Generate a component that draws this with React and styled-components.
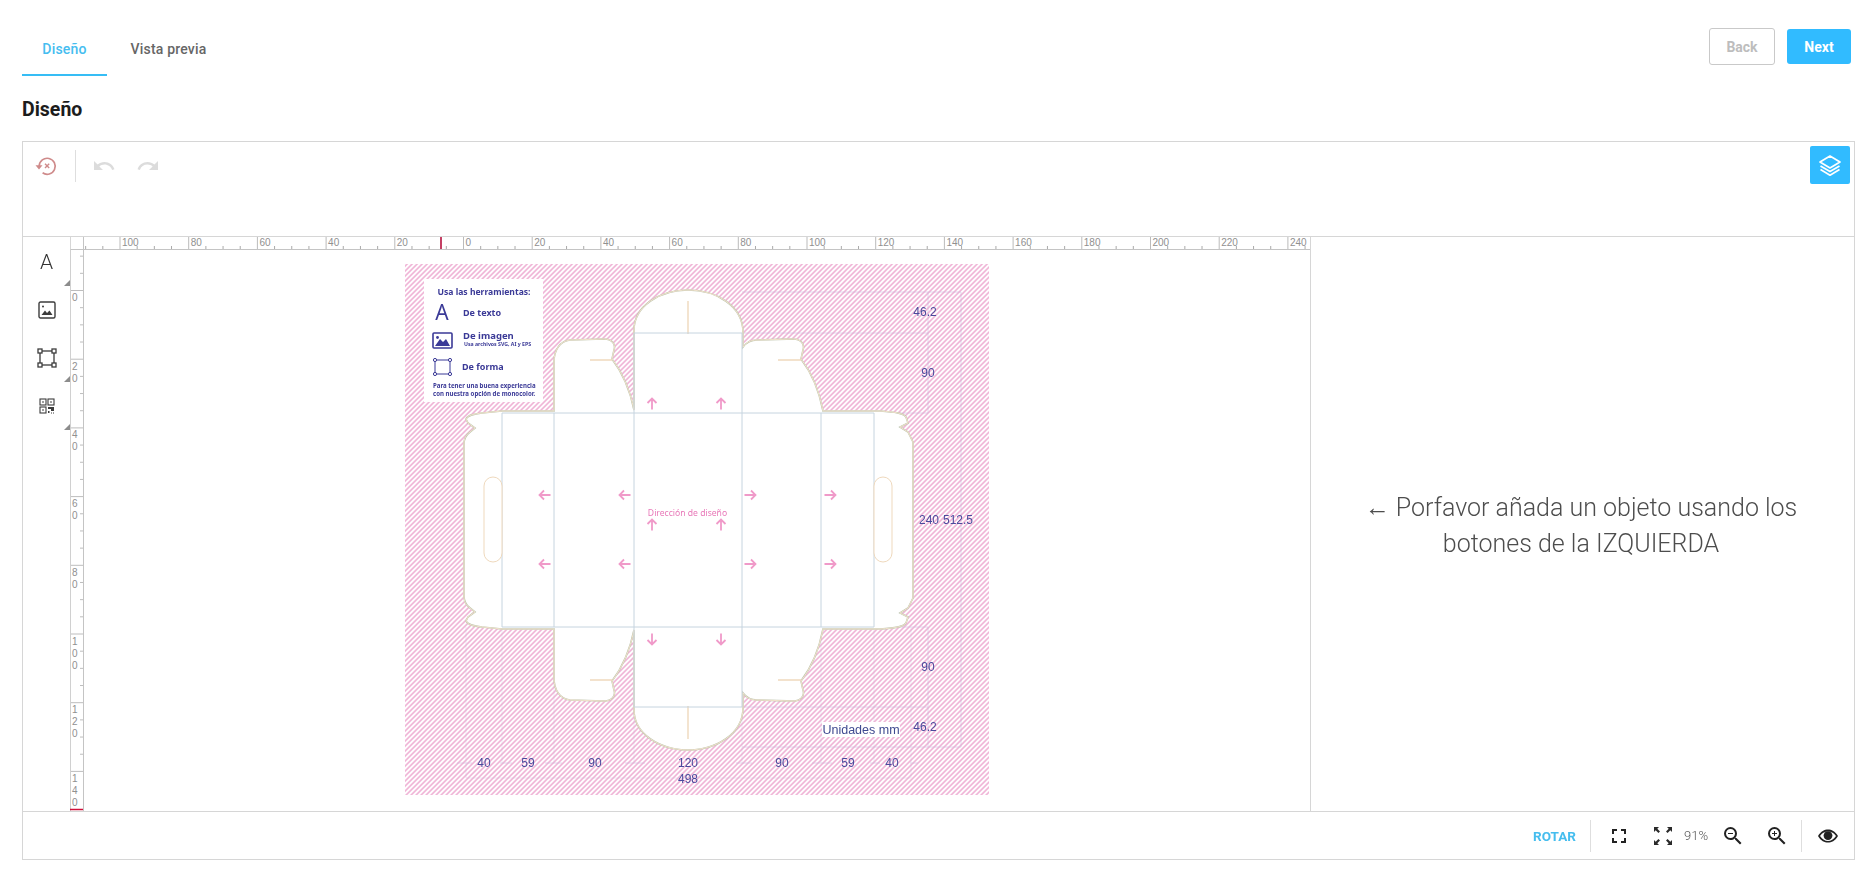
import React from "react";
import styled, { createGlobalStyle } from "styled-components";
import { MdUndo, MdRedo, MdFullscreen, MdOutlineZoomIn, MdOutlineZoomOut } from "react-icons/md";

const Global = createGlobalStyle`
  html, body { margin: 0; padding: 0; background: #fff; }
  body { font-family: Roboto, "Liberation Sans", sans-serif; color: #222; }
  *, *::before, *::after { box-sizing: border-box; }
`;

const Page = styled.div`
  width: 1874px;
  height: 873px;
  padding: 0 19px 0 22px;
  display: flex;
  flex-direction: column;
`;
const TopBar = styled.div`
  height: 76px;
  display: flex;
  justify-content: space-between;
  align-items: flex-start;
`;
const Tabs = styled.div`
  display: flex;
  height: 76px;
`;
const Tab = styled.div`
  width: ${(p) => p.$w}px;
  height: 76px;
  padding-top: 40px;
  text-align: center;
  font-size: 14px;
  line-height: 18px;
  font-weight: 500;
  letter-spacing: 0.2px;
  color: ${(p) => (p.$active ? "#45bdf0" : "#666")};
  border-bottom: 2px solid ${(p) => (p.$active ? "#36bdf5" : "transparent")};
`;
const Actions = styled.div`
  display: flex;
  gap: 12px;
  margin: 28px 4px 0 0;
  align-items: center;
`;
const ActionButton = styled.button`
  height: ${(p) => (p.$primary ? 35 : 37)}px;
  width: ${(p) => (p.$primary ? 64 : 66)}px;
  border-radius: 3px;
  font: 700 14px Roboto, sans-serif;
  padding: 0;
  border: ${(p) => (p.$primary ? "none" : "1px solid #c9c9c9")};
  background: ${(p) => (p.$primary ? "#31bbff" : "#fff")};
  color: ${(p) => (p.$primary ? "#fff" : "#bdbdbd")};
`;
const Title = styled.h2`
  margin: 0;
  height: 65px;
  padding-top: 22px;
  font-size: 19.5px;
  line-height: 23px;
  font-weight: 700;
  color: #1c1c1c;
`;
const Frame = styled.div`
  width: 1833px;
  height: 719px;
  border: 1px solid #d6d6d6;
  display: flex;
  flex-direction: column;
`;
const Toolbar = styled.div`
  height: 95px;
  flex: none;
  border-bottom: 1px solid #d6d6d6;
  display: flex;
  align-items: flex-start;
  padding: 8px 4px 0 0;
`;
const ToolIcon = styled.div`
  width: ${(p) => p.$w}px;
  height: 32px;
  margin-left: ${(p) => p.$ml || 0}px;
  display: flex;
  align-items: center;
  justify-content: center;
  color: ${(p) => p.$color || "#dcdcdc"};
  flex: none;
`;
const VRule = styled.div`
  width: 1px;
  height: ${(p) => p.$h}px;
  background: #dedede;
  flex: none;
  margin: ${(p) => p.$m || 0};
`;
const LayersButton = styled.div`
  width: 40px;
  height: 38px;
  margin: -4px 0 0 auto;
  background: #31bbff;
  border-radius: 2px;
  display: flex;
  align-items: center;
  justify-content: center;
`;
const Workspace = styled.div`
  height: 575px;
  flex: none;
  display: flex;
  border-bottom: 1px solid #d6d6d6;
`;
const ToolColumn = styled.div`
  width: 47px;
  flex: none;
  padding-top: 1px;
`;
const ToolButton = styled.div`
  position: relative;
  height: 48px;
  display: flex;
  align-items: center;
  justify-content: center;
  color: #333;
  font-size: 21px;
  font-weight: 300;
  &::after {
    content: "";
    display: ${(p) => (p.$corner ? "block" : "none")};
    position: absolute;
    right: 0;
    bottom: 0;
    border-style: solid;
    border-width: 0 0 6px 6px;
    border-color: transparent transparent #8c8c8c transparent;
  }
`;
const Stage = styled.div`
  width: 1241px;
  flex: none;
  border-right: 1px solid #d6d6d6;
  display: grid;
  grid-template-columns: 14px 1fr;
  grid-template-rows: 13px 1fr;
  overflow: hidden;
`;
const RulerCorner = styled.div`
  border-right: 1px solid #c4c4c4;
  border-bottom: 1px solid #c4c4c4;
  border-left: 1px solid #d6d6d6;
`;
const RulerSvg = styled.svg`
  display: block;
`;
const Canvas = styled.div`
  padding: 14px 0 0 321px;
`;
const ArtworkSvg = styled.svg`
  display: block;
`;
const Message = styled.div`
  flex: 1;
  display: flex;
  align-items: center;
  justify-content: center;
  text-align: center;
  padding: 2px 3px 0 0;
  font-size: 25px;
  line-height: 36px;
  font-weight: 300;
  color: #4d4d4d;
`;
const MessageArrow = styled.span`
  font-family: "Liberation Sans", sans-serif;
`;
const StatusBar = styled.div`
  flex: 1;
  display: flex;
  align-items: center;
  justify-content: flex-end;
  color: #222;
`;
const Rotate = styled.span`
  font-size: 13.5px;
  font-weight: 700;
  color: #45bdee;
  margin-right: 14px;
`;
const StatusIcon = styled.div`
  width: ${(p) => p.$w}px;
  flex: none;
  display: flex;
  align-items: center;
  justify-content: center;
`;
const Percent = styled.span`
  font-size: 13px;
  font-weight: 300;
  color: #555;
  width: 30px;
  text-align: center;
`;

const Ruler = ({ horizontal }) => {
  const items = [];
  const u = 68.7 / 4;
  if (horizontal) {
    const ox = 463 - 84;
    for (let i = -22; i <= 50; i++) {
      const x = ox + i * u + 0.5;
      if (x < 0) continue;
      const major = i % 4 === 0;
      items.push(<line key={i} x1={x} x2={x} y1={major ? 0 : 9} y2={12} stroke={major ? "#bbb" : "#aaa"} strokeWidth="1" />);
      if (major) items.push(<text key={"t" + i} x={x + 2} y={8.5} fontSize="10" fontFamily="Liberation Sans" fill="#909090">{Math.abs(i * 5)}</text>);
    }
    return (
      <RulerSvg width="1227" height="13">
        {items}
        <line x1="357" x2="357" y1="0" y2="12" stroke="#b00030" strokeWidth="1.5" />
        <line x1="0" x2="1227" y1="12.5" y2="12.5" stroke="#c4c4c4" />
      </RulerSvg>
    );
  }
  const oy = 290 - 250;
  for (let i = -2; i <= 28; i++) {
    const y = oy + i * u + 0.5;
    const major = i % 4 === 0;
    items.push(<line key={i} x1={major ? 0 : 10} x2={13} y1={y} y2={y} stroke="#bdbdbd" />);
    if (major && i >= 0) {
      String(i * 5).split("").forEach((d, k) => {
        items.push(<text key={`t${i}-${k}`} x={2} y={y + 10.5 + k * 12} fontSize="10" fontFamily="Liberation Sans" fill="#909090">{d}</text>);
      });
    }
  }
  return (
    <RulerSvg width="14" height="561">
      {items}
      <line x1="0.5" x2="0.5" y1="0" y2="561" stroke="#d0d0d0" />
      <line x1="13.5" x2="13.5" y1="0" y2="561" stroke="#c4c4c4" />
      <line x1="0" x2="13" y1="559.5" y2="559.5" stroke="#d0103a" strokeWidth="1.5" />
    </RulerSvg>
  );
};

const outline =
  "M464 520 L464 444 C464 438 466 435 470 432 L475 428 L468 423 L466 419 C468 415 474 414 482 413 L502 411 L554 411 L554 362 C554 350 560 341 570 340 L604 339 C612 339 616 344 614 350 L612 359 C622 372 630 390 634 410 L634 330 C634 306 660 290 688 290 C716 290 743 306 743 332 L743 347 C746 343 750 340 757 340 L793 339 C801 339 805 344 803 350 L801 359 C811 372 819 390 823 411 L880 411 C895 412 903 413 906 417 L908 423 L900 427 L908 432 L913 442 L913 520";

const HalfBox = () => (
  <>
    <path d={outline + " Z"} fill="#fff" stroke="none" />
    <path d={outline} fill="none" stroke="#bcc4ae" strokeWidth="1.6" />
    <path d={outline} fill="none" stroke="#f1e2cb" strokeWidth="1" />
    <path d="M688 301 V334 M590 360 H612 M778 360 H801" stroke="#efd9bd" strokeWidth="1.4" fill="none" />
  </>
);

const Arrow = ({ x, y, r }) => (
  <path
    transform={`translate(${x} ${y}) rotate(${r})`}
    d="M0 5.5 V-5.5 M-4.5 -1 L0 -5.5 L4.5 -1"
    stroke="#f09ac9"
    strokeWidth="1.8"
    fill="none"
  />
);

const DimText = ({ x, y, children }) => (
  <text x={x} y={y} textAnchor="middle" fontSize="12" fontFamily="Liberation Sans" fill="#4a4a9c">{children}</text>
);

const LegendText = ({ x, y, s, anchor, children }) => (
  <text x={x} y={y} fontSize={s} fontWeight="700" textAnchor={anchor} fontFamily="Noto Sans" fill="#3b3a97">{children}</text>
);

const Artwork = () => (
  <ArtworkSvg width="584" height="531" viewBox="405 264 584 531">
    <defs>
      <pattern id="hatch" width="3.5355" height="3.5355" patternUnits="userSpaceOnUse" patternTransform="rotate(45)">
        <rect width="3.5355" height="3.5355" fill="#fff" />
        <rect width="1.6" height="3.5355" fill="#efb2d5" />
      </pattern>
    </defs>
    <rect x="405" y="264" width="584" height="531" fill="url(#hatch)" />

    <g stroke="#cdb7dc" strokeWidth="1" fill="none" opacity="0.55">
      <path d="M742 292 H961 V747 H742 M742 333 H928 V413 M823 413 H928 M928 292 V333 M928 627 V747 M823 627 H928 M742 707 H928" />
      <path d="M466 627 V778 H911 V627 M502 627 V763 M554 627 V763 M634 707 V763 M742 707 V763 M821 627 V763 M874 627 V763" opacity="0.5" />
      <path d="M457 763 H472 M500 763 H512 M545 763 H562 M625 763 H645 M736 763 H752 M812 763 H832 M870 763 H880 M910 763 H918" />
    </g>

    <HalfBox />
    <g transform="translate(0 1040) scale(1 -1)"><HalfBox /></g>

    <g stroke="#c6d4df" strokeWidth="1" fill="none">
      <path d="M502 413 H874 M502 627 H874 M634 333 H742 M634 707 H742 M502 413 V627 M554 413 V627 M634 333 V707 M742 333 V707 M821 413 V627 M874 413 V627" />
    </g>
    <g stroke="#efd9bd" strokeWidth="1" fill="#fff">
      <rect x="484" y="477" width="18" height="85" rx="9" />
      <rect x="874" y="477" width="18" height="85" rx="9" />
    </g>

    {[[545, 495], [625, 495], [545, 564], [625, 564]].map(([x, y]) => <Arrow key={`l${x}${y}`} x={x} y={y} r={-90} />)}
    {[[750, 495], [830, 495], [750, 564], [830, 564]].map(([x, y]) => <Arrow key={`r${x}${y}`} x={x} y={y} r={90} />)}
    {[[652, 404], [721, 404], [652, 525], [721, 525]].map(([x, y]) => <Arrow key={`u${x}${y}`} x={x} y={y} r={0} />)}
    {[[652, 639], [721, 639]].map(([x, y]) => <Arrow key={`d${x}${y}`} x={x} y={y} r={180} />)}
    <text x="687.5" y="516" textAnchor="middle" fontSize="8.6" fontFamily="Noto Sans" fill="#e878b8">Dirección de diseño</text>

    <rect x="424" y="279" width="119" height="123" fill="#fff" />
    <LegendText x={484} y={295} s={8.6} anchor="middle">Usa las herramientas:</LegendText>
    <text x="442" y="320" textAnchor="middle" fontSize="21" fontFamily="Noto Sans" fill="#3b3a97">A</text>
    <LegendText x={463} y={316} s={9}>De texto</LegendText>
    <g>
      <rect x="433" y="333" width="19" height="15" rx="1" fill="#fff" stroke="#3b3a97" strokeWidth="1.6" />
      <path d="M435 346 L440 339 L443 342 L446 339 L450 346 Z" fill="#3b3a97" />
      <circle cx="437.5" cy="337.5" r="1.4" fill="#3b3a97" />
    </g>
    <LegendText x={463} y={339} s={9.5}>De imagen</LegendText>
    <LegendText x={464} y={346} s={5.2}>Usa archivos SVG, AI y EPS</LegendText>
    <g fill="#fff" stroke="#3b3a97" strokeWidth="1">
      <rect x="435" y="360" width="15" height="14" fill="none" />
      <circle cx="435" cy="360" r="1.6" />
      <circle cx="450" cy="360" r="1.6" />
      <circle cx="435" cy="374" r="1.6" />
      <circle cx="450" cy="374" r="1.6" />
    </g>
    <LegendText x={462} y={370} s={9}>De forma</LegendText>
    <LegendText x={433} y={388} s={6.1}>Para tener una buena experiencia</LegendText>
    <LegendText x={433} y={396} s={6.1}>con nuestra opción de monocolor.</LegendText>

    <DimText x={925} y={316}>46.2</DimText>
    <DimText x={928} y={377}>90</DimText>
    <DimText x={928} y={671}>90</DimText>
    <DimText x={925} y={731}>46.2</DimText>
    <DimText x={929} y={524}>240</DimText>
    <DimText x={958} y={524}>512.5</DimText>
    {[[484, "40"], [528, "59"], [595, "90"], [688, "120"], [782, "90"], [848, "59"], [892, "40"]].map(([x, t], i) => (
      <DimText key={i} x={x} y={767}>{t}</DimText>
    ))}
    <DimText x={688} y={783}>498</DimText>
    <rect x="822" y="722" width="78" height="15" fill="#fff" />
    <text x="861" y="733.5" textAnchor="middle" fontSize="12.5" fontFamily="Liberation Sans" fill="#3e4a90">Unidades mm</text>
  </ArtworkSvg>
);

const RevertIcon = () => (
  <svg width="24" height="24" viewBox="0 0 24 24" fill="none" stroke="#cf8b8b" strokeWidth="1.7">
    <path d="M5.2 12 A 8 8 0 1 1 8.6 18.8" />
    <path d="M1.5 11.2 H8.5 L5 15.5 Z" fill="#cf8b8b" stroke="none" />
    <path d="M11 9.8 L15.2 14 M15.2 9.8 L11 14" strokeWidth="1.4" />
  </svg>
);

const LayersIcon = () => (
  <svg width="24" height="24" viewBox="0 0 24 24" fill="none" stroke="#fff" strokeWidth="1.7" strokeLinejoin="round">
    <path d="M12 3 L22 9 L12 15 L2 9 Z" />
    <path d="M2.5 13 L12 18.6 L21.5 13" />
    <path d="M2.5 16.6 L12 22.2 L21.5 16.6" />
  </svg>
);

const ImageIcon = () => (
  <svg width="18" height="18" viewBox="0 0 18 18" fill="none">
    <rect x="1" y="1" width="16" height="16" rx="1.5" stroke="#3c3c3c" strokeWidth="1.4" />
    <circle cx="5" cy="5.5" r="1" fill="#3c3c3c" />
    <path d="M3.5 14 L7 9.5 L9 12 L11.5 9.5 L14.5 14 Z" fill="#3c3c3c" />
  </svg>
);

const ShapeIcon = () => (
  <svg width="20" height="20" viewBox="0 0 20 20" fill="none" stroke="#3c3c3c" strokeWidth="1.3">
    <rect x="3" y="3" width="14" height="14" />
    {[[1, 1], [15, 1], [1, 15], [15, 15]].map(([x, y]) => (
      <rect key={`${x}${y}`} x={x} y={y} width="4" height="4" fill="#fff" />
    ))}
  </svg>
);

const QrIcon = () => (
  <svg width="16" height="16" viewBox="0 0 16 16" fill="none" stroke="#3c3c3c" strokeWidth="1.1">
    <rect x="1" y="1" width="6" height="6" />
    <rect x="9" y="1" width="6" height="6" />
    <rect x="1" y="9" width="6" height="6" />
    <rect x="3.3" y="3.3" width="1.4" height="1.4" fill="#3c3c3c" stroke="none" />
    <rect x="11.3" y="3.3" width="1.4" height="1.4" fill="#3c3c3c" stroke="none" />
    <rect x="3.3" y="11.3" width="1.4" height="1.4" fill="#3c3c3c" stroke="none" />
    <path d="M9 9 H15 V13 H12 V11 H9 Z" fill="#3c3c3c" stroke="none" />
    <path d="M9 13 H10.5 V15 H9 Z M12 14.5 H13 V15.5 H12 Z M14 14.5 H15 V15.5 H14 Z" fill="#3c3c3c" stroke="none" />
  </svg>
);

const ExpandIcon = () => (
  <svg width="20" height="20" viewBox="0 0 20 20" fill="#2a2a2a">
    <path d="M1 1 H6 L4.3 2.7 L7 5.4 L5.4 7 L2.7 4.3 L1 6 Z" />
    <path d="M19 1 H14 L15.7 2.7 L13 5.4 L14.6 7 L17.3 4.3 L19 6 Z" />
    <path d="M1 19 H6 L4.3 17.3 L7 14.6 L5.4 13 L2.7 15.7 L1 14 Z" />
    <path d="M19 19 H14 L15.7 17.3 L13 14.6 L14.6 13 L17.3 15.7 L19 14 Z" />
  </svg>
);

const EyeIcon = () => (
  <svg width="22" height="16" viewBox="0 0 22 16" fill="#222">
    <path fillRule="evenodd" d="M1 8 C4 3 7.5 1.5 11 1.5 C14.5 1.5 18 3 21 8 C18 13 14.5 14.5 11 14.5 C7.5 14.5 4 13 1 8 Z M3 8 C5.5 11.6 8 13 11 13 C14 13 16.5 11.6 19 8 C16.5 4.8 14 3.6 11 3.6 C8 3.6 5.5 4.8 3 8 Z" />
    <circle cx="11" cy="7.6" r="4.4" />
  </svg>
);

export default function App() {
  return (
    <Page>
      <Global />
      <TopBar>
        <Tabs>
          <Tab $active $w={85}>Diseño</Tab>
          <Tab $w={123}>Vista previa</Tab>
        </Tabs>
        <Actions>
          <ActionButton>Back</ActionButton>
          <ActionButton $primary>Next</ActionButton>
        </Actions>
      </TopBar>
      <Title>Diseño</Title>
      <Frame>
        <Toolbar>
          <ToolIcon $w={46} $color="#cf8b8b"><RevertIcon /></ToolIcon>
          <VRule $h={32} $m="0 0 0 6px" />
          <ToolIcon $w={44} $ml={6} $color="#dcdcdc"><MdUndo size={24} /></ToolIcon>
          <ToolIcon $w={44} $color="#dcdcdc"><MdRedo size={24} /></ToolIcon>
          <LayersButton><LayersIcon /></LayersButton>
        </Toolbar>
        <Workspace>
          <ToolColumn>
            <ToolButton $corner>A</ToolButton>
            <ToolButton><ImageIcon /></ToolButton>
            <ToolButton $corner><ShapeIcon /></ToolButton>
            <ToolButton $corner><QrIcon /></ToolButton>
          </ToolColumn>
          <Stage>
            <RulerCorner />
            <Ruler horizontal />
            <Ruler />
            <Canvas><Artwork /></Canvas>
          </Stage>
          <Message>
            <span><MessageArrow>←</MessageArrow> Porfavor añada un objeto usando los<br />botones de la IZQUIERDA</span>
          </Message>
        </Workspace>
        <StatusBar>
          <Rotate>ROTAR</Rotate>
          <VRule $h={32} $m="0 2px 0 0" />
          <StatusIcon $w={52}><MdFullscreen size={24} /></StatusIcon>
          <StatusIcon $w={36}><ExpandIcon /></StatusIcon>
          <Percent>91%</Percent>
          <StatusIcon $w={44}><MdOutlineZoomOut size={24} /></StatusIcon>
          <StatusIcon $w={44}><MdOutlineZoomIn size={24} /></StatusIcon>
          <VRule $h={32} $m="0 0 0 2px" />
          <StatusIcon $w={52}><EyeIcon /></StatusIcon>
        </StatusBar>
      </Frame>
    </Page>
  );
}
